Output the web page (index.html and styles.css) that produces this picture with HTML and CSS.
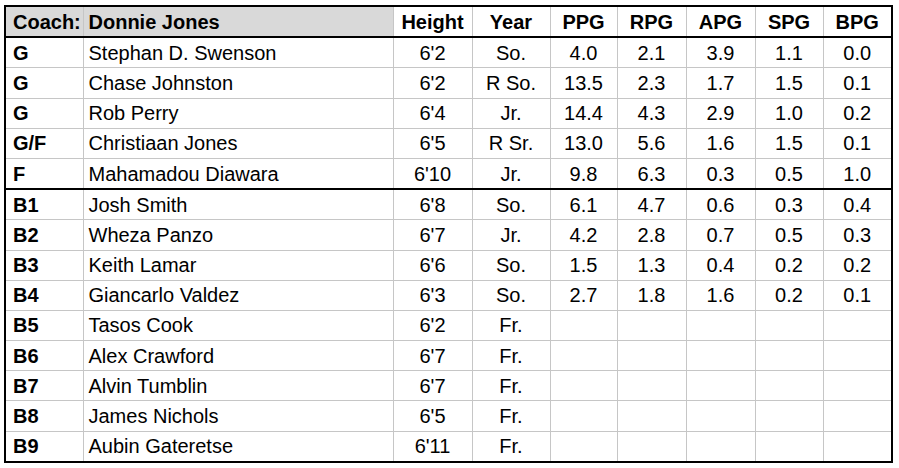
FILE: index.html
```html
<!DOCTYPE html>
<html>
<head>
<meta charset="utf-8">
<link rel="stylesheet" href="styles.css">
</head>
<body>
<div class="wrap">
<table class="roster">
<colgroup>
<col class="c-pos"><col class="c-name"><col class="c-ht"><col class="c-yr"><col class="c-st"><col class="c-st2"><col class="c-st2"><col class="c-st3"><col class="c-st2">
</colgroup>
<thead>
<tr class="head">
<th class="pos shade">Coach:</th><th class="name shade">Donnie Jones</th><th>Height</th><th>Year</th><th>PPG</th><th>RPG</th><th>APG</th><th>SPG</th><th>BPG</th>
</tr>
</thead>
<tbody>
<tr><td class="pos">G</td><td class="name">Stephan D. Swenson</td><td>6'2</td><td>So.</td><td>4.0</td><td>2.1</td><td>3.9</td><td>1.1</td><td>0.0</td></tr>
<tr><td class="pos">G</td><td class="name">Chase Johnston</td><td>6'2</td><td>R So.</td><td>13.5</td><td>2.3</td><td>1.7</td><td>1.5</td><td>0.1</td></tr>
<tr><td class="pos">G</td><td class="name">Rob Perry</td><td>6'4</td><td>Jr.</td><td>14.4</td><td>4.3</td><td>2.9</td><td>1.0</td><td>0.2</td></tr>
<tr><td class="pos">G/F</td><td class="name">Christiaan Jones</td><td>6'5</td><td>R Sr.</td><td>13.0</td><td>5.6</td><td>1.6</td><td>1.5</td><td>0.1</td></tr>
<tr class="split"><td class="pos">F</td><td class="name">Mahamadou Diawara</td><td>6'10</td><td>Jr.</td><td>9.8</td><td>6.3</td><td>0.3</td><td>0.5</td><td>1.0</td></tr>
<tr><td class="pos">B1</td><td class="name">Josh Smith</td><td>6'8</td><td>So.</td><td>6.1</td><td>4.7</td><td>0.6</td><td>0.3</td><td>0.4</td></tr>
<tr><td class="pos">B2</td><td class="name">Wheza Panzo</td><td>6'7</td><td>Jr.</td><td>4.2</td><td>2.8</td><td>0.7</td><td>0.5</td><td>0.3</td></tr>
<tr><td class="pos">B3</td><td class="name">Keith Lamar</td><td>6'6</td><td>So.</td><td>1.5</td><td>1.3</td><td>0.4</td><td>0.2</td><td>0.2</td></tr>
<tr><td class="pos">B4</td><td class="name">Giancarlo Valdez</td><td>6'3</td><td>So.</td><td>2.7</td><td>1.8</td><td>1.6</td><td>0.2</td><td>0.1</td></tr>
<tr><td class="pos">B5</td><td class="name">Tasos Cook</td><td>6'2</td><td>Fr.</td><td></td><td></td><td></td><td></td><td></td></tr>
<tr><td class="pos">B6</td><td class="name">Alex Crawford</td><td>6'7</td><td>Fr.</td><td></td><td></td><td></td><td></td><td></td></tr>
<tr><td class="pos">B7</td><td class="name">Alvin Tumblin</td><td>6'7</td><td>Fr.</td><td></td><td></td><td></td><td></td><td></td></tr>
<tr><td class="pos">B8</td><td class="name">James Nichols</td><td>6'5</td><td>Fr.</td><td></td><td></td><td></td><td></td><td></td></tr>
<tr><td class="pos">B9</td><td class="name">Aubin Gateretse</td><td>6'11</td><td>Fr.</td><td></td><td></td><td></td><td></td><td></td></tr>
</tbody>
</table>
</div>
</body>
</html>
```
FILE: styles.css
```css
html, body {
  margin: 0;
  padding: 0;
  background: #ffffff;
}
.wrap {
  padding: 5px 0 0 4px;
}
.roster {
  border-collapse: collapse;
  table-layout: fixed;
  width: 887px;
  font-family: "Liberation Sans", Arial, sans-serif;
  font-size: 20px;
  color: #000000;
  border: 2px solid #000000;
}
.c-pos { width: 78px; }
.c-name { width: 310px; }
.c-ht { width: 79px; }
.c-yr { width: 78px; }
.c-st { width: 67px; }
.c-st2 { width: 69px; }
.c-st3 { width: 68px; }
.roster th, .roster td {
  border: 1px solid #c6c6c6;
  height: 29.2px;
  padding: 0;
  text-align: center;
  vertical-align: middle;
  white-space: nowrap;
  line-height: 22px;
}
.roster th {
  font-weight: bold;
}
.roster .head th {
  border-bottom: 2px solid #000000;
}
.roster .split td {
  border-bottom: 2px solid #000000;
}
.roster .shade {
  background: #d9d9d9;
}
.roster .pos {
  text-align: left;
  padding-left: 7px;
  font-weight: bold;
}
.roster .name {
  text-align: left;
  padding-left: 5px;
}
.roster th.name {
  font-weight: bold;
}
```
